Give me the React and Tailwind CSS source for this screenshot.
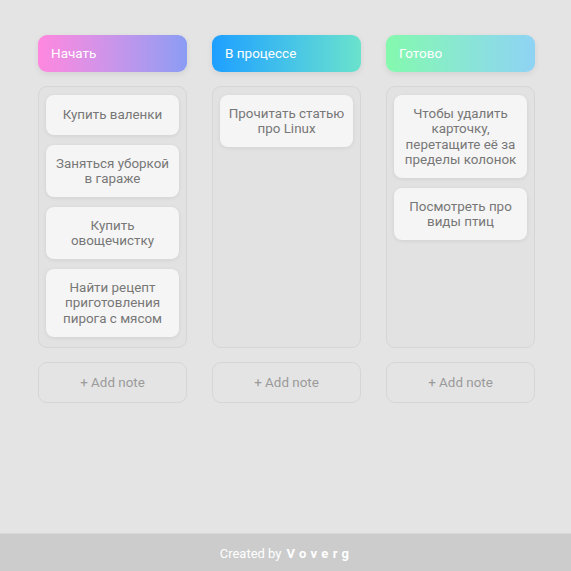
import React from "react";

const columns = [
  {
    title: "Начать",
    grad: "bg-gradient-to-r from-[#ff87df] to-[#8a9cf4]",
    cards: ["Купить валенки", "Заняться уборкой в гараже", "Купить овощечистку", "Найти рецепт приготовления пирога с мясом"],
  },
  {
    title: "В процессе",
    grad: "bg-gradient-to-r from-[#1e9fff] to-[#6ae2cc]",
    cards: ["Прочитать статью про Linux"],
  },
  {
    title: "Готово",
    grad: "bg-gradient-to-r from-[#84f9ad] to-[#8fd3f4]",
    cards: ["Чтобы удалить карточку, перетащите её за пределы колонок", "Посмотреть про виды птиц"],
  },
];

export default function App() {
  return (
    <div className="min-h-[571px] flex flex-col bg-[#e4e4e4]" style={{ fontFamily: "Roboto, 'Liberation Sans', sans-serif" }}>
      <div className="flex justify-center gap-[25px] pt-[35px] pl-[2px]">
        {columns.map((col) => (
          <div key={col.title} className="w-[149px] flex flex-col">
            <div className={`h-[37px] rounded-[9px] ${col.grad} flex items-center pl-[13px] text-white text-[13.5px] shadow-[0_2px_6px_rgba(0,0,0,0.08)]`}>
              {col.title}
            </div>
            <div className="mt-[14px] h-[262px] rounded-[9px] border border-[#d6d6d6] bg-[#e2e2e2] px-[7px] pt-[8px] flex flex-col gap-[10px]">
              {col.cards.map((c) => (
                <div key={c} className="min-h-[40px] rounded-[8px] bg-[#f5f5f5] shadow-[0_1px_4px_rgba(0,0,0,0.08)] flex items-center justify-center text-center px-[6px] py-[10.5px] text-[13.4px] leading-[15.5px] text-[#777777]">
                  {c}
                </div>
              ))}
            </div>
            <div className="mt-[14px] h-[41px] rounded-[9px] border border-[#d6d6d6] flex items-center justify-center text-[13.4px] text-[#9a9a9a] pt-[1px]">
              + Add note
            </div>
          </div>
        ))}
      </div>
      <div className="mt-auto h-[38px] bg-[#cccccc] border-t border-[#d8d8d8] flex items-center justify-center text-white text-[13px] pt-[2px] pl-[2px]">
        <span>Created by</span>
        <span className="ml-[5px] font-bold tracking-[4.3px]">Voverg</span>
      </div>
    </div>
  );
}
